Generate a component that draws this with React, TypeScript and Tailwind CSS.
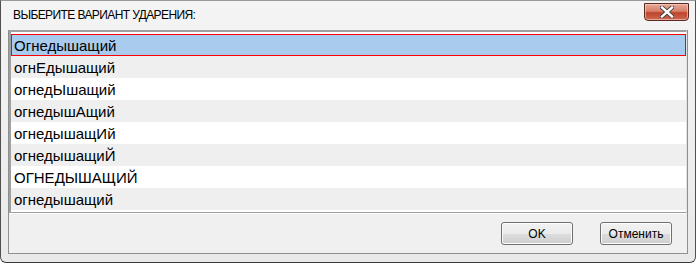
import React from "react";

const rows = [
  "Огнедышащий",
  "огнЕдышащий",
  "огнедЫшащий",
  "огнедышАщий",
  "огнедышащИй",
  "огнедышащиЙ",
  "ОГНЕДЫШАЩИЙ",
  "огнедышащий",
];

function Btn({ label }: { label: string }) {
  return (
    <div className="w-[72px] h-[23px] rounded-[3px] border border-[#707070] bg-[linear-gradient(to_bottom,#f2f2f2_0%,#ebebeb_50%,#dddddd_51%,#cfcfcf_100%)] flex items-center justify-center shadow-[inset_0_0_0_1px_#fcfcfc]">
      <span className="text-[12px] text-black leading-none">{label}</span>
    </div>
  );
}

export default function App() {
  return (
    <div
      className="w-[696px] h-[263px] flex flex-col bg-[linear-gradient(to_bottom,#f4f4f4,#e9e9e9)] border-x border-b border-t border-x-[#505050] border-b-[#3a3a3a] border-t-[#9a9a9a] rounded-b-[6px]"
      style={{ fontFamily: '"Liberation Sans", Arial, sans-serif' }}
    >
      {/* Title bar */}
      <div className="h-[29px] flex items-start justify-between pl-[12px] pr-[6px] shrink-0">
        <div className="pt-[8px] text-[12px] text-black leading-none tracking-[-0.6px]">
          ВЫБЕРИТЕ ВАРИАНТ УДАРЕНИЯ:
        </div>
        <div className="mt-[2px] w-[45px] h-[18px] rounded-b-[4px] border border-[#5a2a22] bg-[linear-gradient(to_bottom,#e6a898_0%,#d7806a_45%,#c0442c_55%,#cc6a52_100%)] flex items-center justify-center shadow-[inset_0_0_0_1px_rgba(255,210,200,0.6)]">
          <svg width="14" height="12" viewBox="0 0 14 12">
            <path
              d="M2 1.5 L12 10.5 M12 1.5 L2 10.5"
              stroke="#3a3a3a"
              strokeWidth="4.2"
              strokeLinecap="square"
            />
            <path
              d="M2 1.5 L12 10.5 M12 1.5 L2 10.5"
              stroke="#ffffff"
              strokeWidth="2.4"
              strokeLinecap="square"
            />
          </svg>
        </div>
      </div>

      {/* Client area */}
      <div className="mx-[7px] flex-1 flex flex-col bg-[#f0f0f0] border border-[#8e8f8f] border-t-0">
        {/* List */}
        <div className="h-[183px] shrink-0 border-t-2 border-l-2 border-t-[#a0a0a0] border-l-[#a0a0a0] border-b border-b-[#a0a0a0] bg-white pt-[2px] border-r border-r-[#e3e3e3]">
          {rows.map((r, i) => (
            <div
              key={i}
              className={
                "h-[22px] flex items-center pl-[3px] text-[15px] text-black leading-none " +
                (i === 0
                  ? "bg-[#a8cbee] shadow-[inset_0_0_0_1px_#ff0000]"
                  : i % 2 === 1
                  ? "bg-[#efefef]"
                  : "bg-white")
              }
            >
              {r}
            </div>
          ))}
        </div>
        <div className="border-t border-white" />
        {/* Buttons */}
        <div className="flex-1 flex items-center justify-end gap-[27px] pr-[15px]">
          <Btn label="OK" />
          <Btn label="Отменить" />
        </div>
      </div>
      <div className="h-[8px] shrink-0" />
    </div>
  );
}
